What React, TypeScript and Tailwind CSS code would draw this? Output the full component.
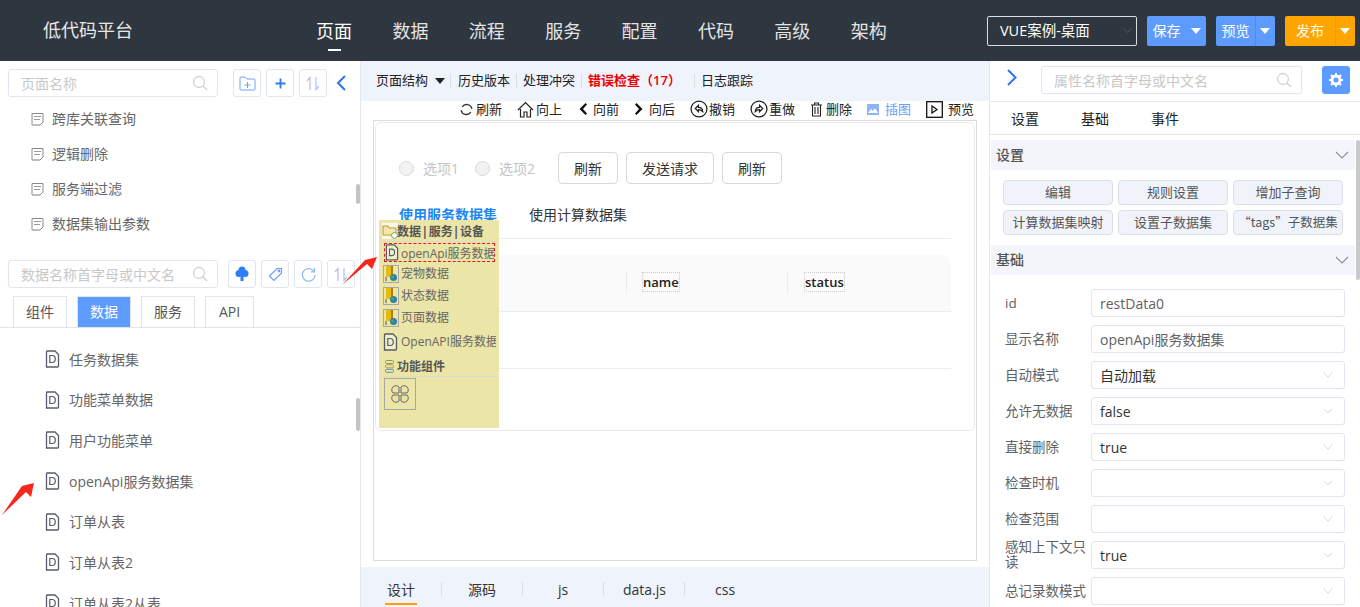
import React from "react";

const Search = () => (
  <svg width="16" height="16" viewBox="0 0 16 16" fill="none" stroke="#d4d4d4" strokeWidth="1.3" className="shrink-0">
    <circle cx="7" cy="7" r="5.5" />
    <path d="M11 11l4 4" strokeWidth="1.6" />
  </svg>
);

const Chevron = ({ color = "#c0c4cc", w = 14 }: { color?: string; w?: number }) => (
  <svg width={w} height={(w * 8) / 14} viewBox="0 0 14 8" fill="none" stroke={color} strokeWidth="1.1" className="shrink-0">
    <path d="M1 1l6 6 6-6" />
  </svg>
);

const DocIcon = () => (
  <svg width="13" height="14" viewBox="0 0 13 14" fill="none" stroke="#8a8a8a" strokeWidth="1" className="shrink-0">
    <path d="M1 12.5V1.5h11v8.5l-3 3H1z" />
    <path d="M3 4.5h7M3 7.5h6" stroke="#9a9a9a" />
    <path d="M1 13h8" stroke="#bbb" strokeWidth="1.5" />
  </svg>
);

const DFile = ({ s = 15, bg = "none" }: { s?: number; bg?: string }) => (
  <svg width={s} height={s * 1.2} viewBox="0 0 15 18" fill={bg} className="shrink-0">
    <path d="M1.5 1h8.5l3.5 3.5V16q0 1-1 1h-11V2q0-1 1-1z" stroke="#555c68" strokeWidth="1.3" />
    <path d="M4.8 5.5v7h2.2q3.3 0 3.3-3.5T7 5.5H4.8z" fill="none" stroke="#555c68" strokeWidth="1.2" />
  </svg>
);

const DbIcon = () => (
  <span className="flex h-[18px] w-[16px] shrink-0 items-center justify-center border border-[#a8a8a0]">
    <svg width="14" height="16" viewBox="0 0 14 16">
      <rect x="2" y="0" width="7" height="11" rx="1" fill="#e8b90f" />
      <rect x="7" y="0" width="2" height="11" fill="#a58210" />
      <circle cx="9.5" cy="11.5" r="3.5" fill="#2f7fa8" />
      <circle cx="8.5" cy="11" r="1.4" fill="#58a84a" />
      <path d="M1 12h2M1 14h2" stroke="#555" strokeWidth="1" />
    </svg>
  </span>
);

const IconBtn = ({ children }: { children: React.ReactNode }) => (
  <div className="flex h-[28px] w-[28px] shrink-0 items-center justify-center rounded-[3px] border border-[#dfe6f2] bg-white">{children}</div>
);

const SortIcon = () => (
  <svg width="14" height="15" viewBox="0 0 14 15" fill="none" strokeWidth="1.2">
    <path d="M4 14V1.5L1 5" stroke="#c3b5e8" />
    <path d="M10 1v12.5L13 10" stroke="#a9c4f0" />
  </svg>
);

const SearchBox = ({ text, w }: { text: string; w: string }) => (
  <div className={`flex h-[28px] items-center justify-between rounded-[3px] border border-[#dfe6f2] pl-[12px] pr-[9px] text-[14px] text-[#c8c8c8] ${w}`}>
    <span>{text}</span>
    <Search />
  </div>
);

const Caret = ({ color = "white" }: { color?: string }) => (
  <svg width="10" height="6" viewBox="0 0 10 6" className="shrink-0">
    <path d="M0 0h10L5 6z" fill={color} />
  </svg>
);

const SplitBtn = ({ label, bg, line, w }: { label: string; bg: string; line: string; w: string }) => (
  <div className={`flex h-[30px] items-stretch rounded-[2px] text-[14px] text-white ${bg} ${w}`}>
    <div className="flex flex-1 items-center justify-center">{label}</div>
    <div className={`flex w-[20px] items-center justify-center border-l ${line}`}>
      <Caret />
    </div>
  </div>
);

const Tool = ({ icon, label, className = "" }: { icon: React.ReactNode; label: string; className?: string }) => (
  <div className={`flex h-[16px] items-center justify-between text-[13px] leading-none ${className}`}>
    {icon}
    <span>{label}</span>
  </div>
);

const Sep = ({ className = "" }: { className?: string }) => <span className={`h-[14px] w-px bg-[#d8dde6] ${className}`} />;

const Radio = ({ label }: { label: string }) => (
  <div className="flex items-center gap-[9px] text-[14px] text-[#c4c4c4]">
    <span className="h-[15px] w-[15px] rounded-full border border-[#d9d9d9] bg-[#f2f2f2]" />
    <span>{label}</span>
  </div>
);

const Btn = ({ label, w }: { label: string; w: string }) => (
  <div className={`flex h-[32px] items-center justify-center rounded-[4px] border border-[#d9d9d9] bg-white text-[14px] text-[#333] ${w}`}>{label}</div>
);

const SectionHead = ({ label }: { label: string }) => (
  <div className="flex h-[30px] items-center justify-between bg-[#f3f5fa] pl-[5px] pr-[6px] text-[14px] font-medium text-[#555]">
    <span className="-mt-[2px]">{label}</span>
    <Chevron color="#8b8f96" />
  </div>
);

const GridBtn = ({ label, cjk }: { label: string; cjk?: boolean }) => (
  <div className={`flex h-[25px] items-center justify-center overflow-hidden whitespace-nowrap rounded-[4px] border border-[#dcdfe6] bg-[#f0f3fa] text-[#555] ${cjk ? "text-[12.5px] [font-family:'Noto_Sans_CJK_SC',sans-serif]" : "text-[13px]"}`}>{label}</div>
);

const Row = ({ label, value, select, dark }: { label: string; value?: string; select?: boolean; dark?: boolean }) => (
  <div className="flex h-[28px] items-center pl-[14px] pr-[10px]">
    <div className="w-[86px] shrink-0 whitespace-normal text-[13.5px] leading-[15px] text-[#606266]">{label}</div>
    <div className="flex h-[28px] flex-1 items-center justify-between rounded-[3px] border border-[#dfe6f2] bg-white pl-[8px] pr-[11px] text-[14px]">
      <span className={dark ? "text-[#333]" : "text-[#606266]"}>{value}</span>
      {select && <Chevron color="#c8ccd4" w={10} />}
    </div>
  </div>
);

const Arrow = ({ points, className }: { points: string; className: string }) => (
  <svg className={`pointer-events-none absolute ${className}`} width="40" height="36" viewBox="0 0 40 36">
    <polygon points={points} fill="#f5281e" />
  </svg>
);

const pages = ["跨库关联查询", "逻辑删除", "服务端过滤", "数据集输出参数"];
const dataItems = ["", "任务数据集", "功能菜单数据", "用户功能菜单", "openApi服务数据集", "订单从表", "订单从表2", "订单从表2从表"];
const nav = ["页面", "数据", "流程", "服务", "配置", "代码", "高级", "架构"];

export default function App() {
  return (
    <div className="relative flex h-[607px] w-[1360px] flex-col overflow-hidden bg-white [font-family:'Open_Sans','Noto_Sans_CJK_SC',sans-serif]">
      {/* Header */}
      <header className="flex h-[61px] shrink-0 items-center bg-[#2e3640] text-white">
        <div className="w-[316px] pl-[43px] text-[18px] text-[#e8e8e8]">低代码平台</div>
        <nav className="flex gap-[40.4px]">
          {nav.map((n, i) => (
            <div key={n} className={`relative text-[18px] leading-[30px] ${i === 0 ? "text-white" : "text-[#e4e4e4]"}`}>
              {n}
              {i === 0 && <span className="absolute bottom-[-5px] left-[12px] h-[2px] w-[13px] bg-white" />}
            </div>
          ))}
        </nav>
        <div className="ml-[100.200px] flex items-center gap-[10px]">
          <div className="flex h-[30px] w-[150px] items-center justify-between rounded-[2px] border border-[#d8dde4] pl-[12px] pr-[4px] text-[14.500px]">
            <span>VUE案例-桌面</span>
            <Chevron color="#5b626c" w={9} />
          </div>
          <SplitBtn label="保存" bg="bg-[#5e9bff]" line="border-[#5e9bff]" w="w-[59px]" />
          <SplitBtn label="预览" bg="bg-[#5e9bff]" line="border-[#4f8cf0]" w="w-[59px]" />
          <SplitBtn label="发布" bg="bg-[#ffa500]" line="border-[#e89a0a]" w="w-[70px]" />
        </div>
      </header>

      <div className="flex min-h-0 flex-1">
        {/* Left */}
        <aside className="relative flex w-[361px] shrink-0 flex-col border-r border-[#e4e7ed]">
          <div className="flex items-center pl-[8px] pt-[8px]">
            <SearchBox text="页面名称" w="w-[210px]" />
            <div className="ml-[15px] flex gap-[5px]">
              <IconBtn>
                <svg width="17" height="15" viewBox="0 0 17 15" fill="none" stroke="#6ea4f5" strokeWidth="1">
                  <path d="M1 13V2q0-1 1-1h4l2 2h7q1 0 1 1v9q0 1-1 1H2q-1 0-1-1z" />
                  <path d="M8.5 6v6M5.5 9h6" />
                </svg>
              </IconBtn>
              <IconBtn>
                <svg width="11" height="11" viewBox="0 0 11 11" stroke="#2f7df6" strokeWidth="1.8">
                  <path d="M5.5 0.5v10M0.5 5.5h10" />
                </svg>
              </IconBtn>
              <IconBtn><SortIcon /></IconBtn>
            </div>
            <svg className="ml-[8px]" width="12" height="16" viewBox="0 0 12 16" fill="none" stroke="#2f74f0" strokeWidth="2">
              <path d="M10 1L3 8l7 7" />
            </svg>
          </div>
          <div className="mt-[3px] h-[135px] overflow-hidden pt-[1px]">
            {pages.map((p) => (
              <div key={p} className="flex h-[35px] items-center gap-[8px] pl-[31px] text-[14px] text-[#666]">
                <DocIcon />
                <span>{p}</span>
              </div>
            ))}
          </div>
          <div className="mt-[25px] flex items-center pl-[8px]">
            <SearchBox text="数据名称首字母或中文名" w="w-[210px]" />
            <div className="ml-[10px] flex gap-[5px]">
              <IconBtn>
                <svg width="14" height="16" viewBox="0 0 14 16" fill="#2f7df6">
                  <circle cx="7" cy="4" r="3.500" />
                  <circle cx="4" cy="7.500" r="3.500" />
                  <circle cx="10" cy="7.500" r="3.500" />
                  <rect x="5.500" y="9" width="3" height="6" />
                </svg>
              </IconBtn>
              <IconBtn>
                <svg width="15" height="15" viewBox="0 0 15 15" fill="none" stroke="#6e9ff5" strokeWidth="1.2">
                  <path d="M9 1.5h4.5V6l-7.5 7.5L1.5 9z" />
                  <circle cx="11" cy="4" r="0.8" />
                </svg>
              </IconBtn>
              <IconBtn>
                <svg width="15" height="15" viewBox="0 0 15 15" fill="none" stroke="#8fb6f5" strokeWidth="1.2">
                  <path d="M13 4.5A6.3 6.3 0 1 0 14 8" />
                  <path d="M13.5 1v3.8H10" />
                </svg>
              </IconBtn>
              <IconBtn><SortIcon /></IconBtn>
            </div>
          </div>
          <div className="mt-[8px] flex h-[32px] gap-[10px] border-b border-[#dfe3ec] pl-[13px] text-[14px] leading-[30px]">
            <div className="flex h-[31px] w-[54px] items-center justify-center border border-b-0 border-[#dfe6f2] text-[#555]">组件</div>
            <div className="flex h-[31px] w-[54px] items-center justify-center border border-b-0 border-[#dfe6f2] bg-[#5e9bff] text-white">数据</div>
            <div className="flex h-[31px] w-[54px] items-center justify-center border border-b-0 border-[#dfe6f2] text-[#555]">服务</div>
            <div className="flex h-[31px] w-[49px] items-center justify-center border border-b-0 border-[#dfe6f2] text-[#555]">API</div>
          </div>
          <div className="min-h-0 flex-1 overflow-hidden">
            <div className="-mt-[30px]">
              {dataItems.map((d, i) => (
                <div key={i} className="flex h-[40.7px] items-center gap-[9px] pl-[45px] text-[14px] text-[#666]">
                  <DFile />
                  <span>{d}</span>
                </div>
              ))}
            </div>
          </div>
          <div className="absolute left-[356px] top-[123px] h-[20px] w-[4px] rounded-[2px] bg-[#c4c4c4]" />
          <div className="absolute left-[356px] top-[337px] h-[33px] w-[4px] rounded-[2px] bg-[#c4c4c4]" />
        </aside>

        {/* Center */}
        <main className="flex w-[628px] shrink-0 flex-col">
          <div className="flex h-[40px] shrink-0 items-center bg-[#eff3fb] pl-[15px] text-[13px] text-[#222]">
            <span>页面结构</span>
            <span className="ml-[7px]"><Caret color="#222" /></span>
            <Sep className="ml-[5px] mr-[7px]" />
            <span>历史版本</span>
            <Sep className="mx-[6px]" />
            <span>处理冲突</span>
            <Sep className="mx-[6px]" />
            <span className="font-semibold text-[#f00000]">错误检查（17）</span>
            <Sep className="ml-[13px] mr-[6px]" />
            <span>日志跟踪</span>
          </div>
          <div className="flex h-[19px] shrink-0 items-start justify-end gap-[15px] pr-[15px] text-[#222]">
            <Tool label="刷新" className="w-[42px]" icon={<svg width="13" height="13" viewBox="0 0 12 12" fill="none" stroke="#333" strokeWidth="1.2"><path d="M2 3.5a5 5 0 0 1 9 2M10 8.5a5 5 0 0 1-9-2" /></svg>} />
            <Tool label="向上" className="w-[45px]" icon={<svg width="17" height="17" viewBox="0 0 17 17" fill="none" stroke="#222" strokeWidth="1.2"><path d="M1 9l7.5-7.500L16 9M3.500 8v8h3.500v-5h3v5h3.500V8" /></svg>} />
            <Tool label="向前" className="w-[42px]" icon={<svg width="11" height="12" viewBox="0 0 10 12"><path d="M8 0L2 6l6 6 1.500-1.500L5.500 6l4-4.500z" fill="#111" /></svg>} />
            <Tool label="向后" className="w-[41px]" icon={<svg width="11" height="12" viewBox="0 0 10 12"><path d="M2 0l6 6-6 6-1.500-1.500L4.500 6l-4-4.500z" fill="#111" /></svg>} />
            <Tool label="撤销" className="w-[45px]" icon={<svg width="18" height="18" viewBox="0 0 17 17" fill="none" stroke="#222" strokeWidth="1.2"><circle cx="8.500" cy="8.500" r="7.500" /><path d="M5 8l3-3v2q4 0 4 4-2-2-4-2v2z" /></svg>} />
            <Tool label="重做" className="w-[45px]" icon={<svg width="18" height="18" viewBox="0 0 17 17" fill="none" stroke="#222" strokeWidth="1.2"><circle cx="8.500" cy="8.500" r="7.500" /><path d="M12 8L9 5v2q-4 0-4 4 2-2 4-2v2z" /></svg>} />
            <Tool label="删除" className="w-[42px]" icon={<svg width="13" height="15" viewBox="0 0 13 15" fill="none" stroke="#222" strokeWidth="1.100"><path d="M1 3h11M4.500 3V1h4v2" /><path d="M2.500 3v11h8V3M5 5v7M8 5v7" /></svg>} />
            <Tool label="插图" className="w-[44px] text-[#6e9ff5]" icon={<svg width="12" height="11" viewBox="0 0 12 11"><rect width="12" height="11" fill="#8db4f5" /><path d="M1 9l3-4 2 2 2-3 3 5z" fill="#fff" /></svg>} />
            <Tool label="预览" className="w-[48px]" icon={<svg width="17" height="17" viewBox="0 0 17 17" fill="none" stroke="#111" strokeWidth="1.300"><rect x="0.700" y="0.700" width="15.600" height="15.600" /><path d="M6 5l5 3.500L6 12z" /></svg>} />
          </div>

          {/* Canvas */}
          <div className="mx-[12px] h-[441px] shrink-0 border border-[#dcdcdc] p-px">
            <div className="h-[309px] rounded-[6px] border border-[#ebebeb] px-[3px]">
              <div className="flex h-[61px] items-end pl-[20px]">
                <div className="flex items-center">
                  <div className="flex gap-[16px]">
                    <Radio label="选项1" />
                    <Radio label="选项2" />
                  </div>
                  <div className="ml-[23px] flex gap-[8px]">
                    <Btn label="刷新" w="w-[60px]" />
                    <Btn label="发送请求" w="w-[88px]" />
                    <Btn label="刷新" w="w-[60px]" />
                  </div>
                </div>
              </div>
              <div className="mt-[15px] flex h-[40px] w-[572px] items-start gap-[32px] border-b border-[#ececec] pl-[20px] pt-[6px] text-[14px] leading-[20px]">
                <span className="font-semibold text-[#1b87f5]">使用服务数据集</span>
                <span className="text-[#333]">使用计算数据集</span>
              </div>
              <div className="mt-[16px] w-[572px]">
                <div className="flex h-[57px] items-center rounded-t-[8px] border-b border-[#ececec] bg-[#fafafa] text-[13px] font-semibold text-[#222]">
                  <div className="w-[247px]" />
                  <span className="h-[22px] w-px bg-[#ececec]" />
                  <div className="w-[160px] pl-[16px]">
                    <span className="outline-1 outline-dotted outline-[#cccccc]">name</span>
                  </div>
                  <span className="h-[22px] w-px bg-[#ececec]" />
                  <div className="pl-[17px]">
                    <span className="outline-1 outline-dotted outline-[#cccccc]">status</span>
                  </div>
                </div>
                <div className="h-[57px] border-b border-[#ececec]" />
              </div>
            </div>
          </div>

          <div className="mt-[6px] flex min-h-0 flex-1 items-center bg-[#eff3fb] pl-[26px] pt-[4px] text-[14px] text-[#333]">
            <div className="relative w-[28px] text-center">
              设计
              <span className="absolute bottom-[-5px] left-[-2px] h-[2px] w-[32px] bg-[#ff9f0a]" />
            </div>
            <Sep className="ml-[26px] bg-[#b5b5b5]" />
            <div className="ml-[26px] w-[28px]">源码</div>
            <Sep className="ml-[26px] bg-[#b5b5b5]" />
            <div className="ml-[35px] w-[10px]">js</div>
            <Sep className="ml-[35px] bg-[#b5b5b5]" />
            <div className="ml-[19px] w-[43px]">data.js</div>
            <Sep className="ml-[18px] bg-[#b5b5b5]" />
            <div className="ml-[30px]">css</div>
          </div>
        </main>

        {/* Right */}
        <aside className="relative flex min-w-0 flex-1 flex-col border-l border-[#e4e7ed]">
          <div className="flex h-[41px] shrink-0 items-center border-b border-[#e4e7ed] pb-[2px]">
            <svg className="ml-[16px] mt-[-6px]" width="12" height="17" viewBox="0 0 12 17" fill="none" stroke="#2f74f0" strokeWidth="2">
              <path d="M2 1l7.500 7.500L2 16" />
            </svg>
            <SearchBox text="属性名称首字母或中文名" w="ml-[23px] w-[261px]" />
            <div className="ml-[20px] flex h-[28px] w-[28px] items-center justify-center rounded-[3px] bg-[#5e9bff]">
              <svg width="14" height="14" viewBox="0 0 14 14">
                <circle cx="7" cy="7" r="4" fill="none" stroke="#fff" strokeWidth="3" />
                <path d="M7 0v14M0 7h14M2 2l10 10M12 2L2 12" stroke="#fff" strokeWidth="2" strokeDasharray="2.500 9 2.500 0" />
              </svg>
            </div>
          </div>
          <div className="flex h-[33px] shrink-0 items-center gap-[42px] border-b border-[#e4e7ed] pl-[21px] text-[14px] text-[#222]">
            <span>设置</span>
            <span>基础</span>
            <span>事件</span>
          </div>
          <div className="mt-[5px] w-[365px] pl-px">
            <SectionHead label="设置" />
            <div className="grid grid-cols-3 gap-x-[5px] gap-y-[5px] py-[10px] pl-[12px] pr-[12px]">
              <GridBtn label="编辑" />
              <GridBtn label="规则设置" />
              <GridBtn label="增加子查询" />
              <GridBtn label="计算数据集映射" />
              <GridBtn label="设置子数据集" />
              <GridBtn label="“tags”子数据集" cjk />
            </div>
            <SectionHead label="基础" />
            <div className="mt-[14px] flex flex-col gap-[8px]">
              <Row label="id" value="restData0" />
              <Row label="显示名称" value="openApi服务数据集" />
              <Row label="自动模式" value="自动加载" select dark />
              <Row label="允许无数据" value="false" select dark />
              <Row label="直接删除" value="true" select dark />
              <Row label="检查时机" select />
              <Row label="检查范围" select />
              <Row label="感知上下文只读" value="true" select dark />
              <Row label="总记录数模式" select />
            </div>
          </div>
          <div className="absolute left-[366px] top-[79px] h-[140px] w-[4px] rounded-[2px] bg-[#c9c9c9]" />
        </aside>
      </div>

      {/* Palette overlay */}
      <div className="absolute left-[379px] top-[220px] h-[208px] w-[120px] bg-[#ebe5a8] text-[12px] text-[#666]">
        <div className="flex h-[22px] items-center border-b border-[#dcdcc8] pl-[3px]">
          <svg width="16" height="16" viewBox="0 0 16 16" className="shrink-0">
            <rect width="16" height="16" fill="#fff" opacity="0.7" />
            <path d="M1 12V3h5l1 2h7v7H1z" fill="#f6e7a8" stroke="#b89a3a" />
            <circle cx="12.500" cy="12.500" r="3" fill="#fff" stroke="#6aa84f" />
          </svg>
          <span className="-ml-px mt-[2px] whitespace-nowrap font-bold text-[#555] [word-spacing:-2.5px]">数据 | 服务| 设备</span>
        </div>
        <div className="mx-[5px] mt-[1px] flex h-[19px] w-[111px] items-center gap-[2px] overflow-hidden whitespace-nowrap border border-dashed border-[#e8141e]">
          <DFile s={14} bg="#f2efc8" />
          <span className="mt-[2px]">openApi服务数据</span>
        </div>
        <div className="mt-[3px] flex h-[18px] items-center gap-[2px] pl-[4px]">
          <DbIcon />
          <span>宠物数据</span>
        </div>
        <div className="mt-[4px] flex h-[18px] items-center gap-[2px] pl-[4px]">
          <DbIcon />
          <span>状态数据</span>
        </div>
        <div className="mt-[4px] flex h-[18px] items-center gap-[2px] pl-[4px]">
          <DbIcon />
          <span>页面数据</span>
        </div>
        <div className="mt-[5px] flex h-[20px] items-center gap-[3px] whitespace-nowrap pl-[4px]">
          <DFile s={15} bg="#f2efc8" />
          <span className="w-[95px] overflow-hidden">OpenAPI服务数据</span>
        </div>
        <div className="mt-[3px] flex h-[22px] items-center gap-[3px] border-b border-[#dcdcc8] pl-[6px] pt-[2px] font-bold text-[#555]">
          <svg width="9" height="13" viewBox="0 0 9 13" fill="none" strokeWidth="1">
            <rect x="0.500" y="0.500" width="8" height="3" rx="1" stroke="#7aa05a" />
            <rect x="0.500" y="4.800" width="8" height="3" rx="1" stroke="#b09a4a" />
            <rect x="0.500" y="9.300" width="8" height="3" rx="1" stroke="#5a8ac0" />
          </svg>
          <span>功能组件</span>
        </div>
        <div className="ml-[5px] mt-[1px] flex h-[32px] w-[32px] items-center justify-center border border-[#a8a8a0]">
          <svg width="24" height="24" viewBox="0 0 24 24" fill="none" stroke="#666" strokeWidth="1">
            <path d="M11 11H5a4 4 0 1 1 6-6zM13 11h6a4 4 0 1 0-6-6zM11 13H5a4 4 0 1 0 6 6zM13 13h6a4 4 0 1 1-6 6z" />
          </svg>
        </div>
      </div>

      <Arrow className="left-[0px] top-[481px]" points="2,34 22,5 34,2 31,16 26,11" />
      <Arrow className="left-[340px] top-[254px]" points="2,31 25,6 37,3 32,15 27,10" />
    </div>
  );
}
